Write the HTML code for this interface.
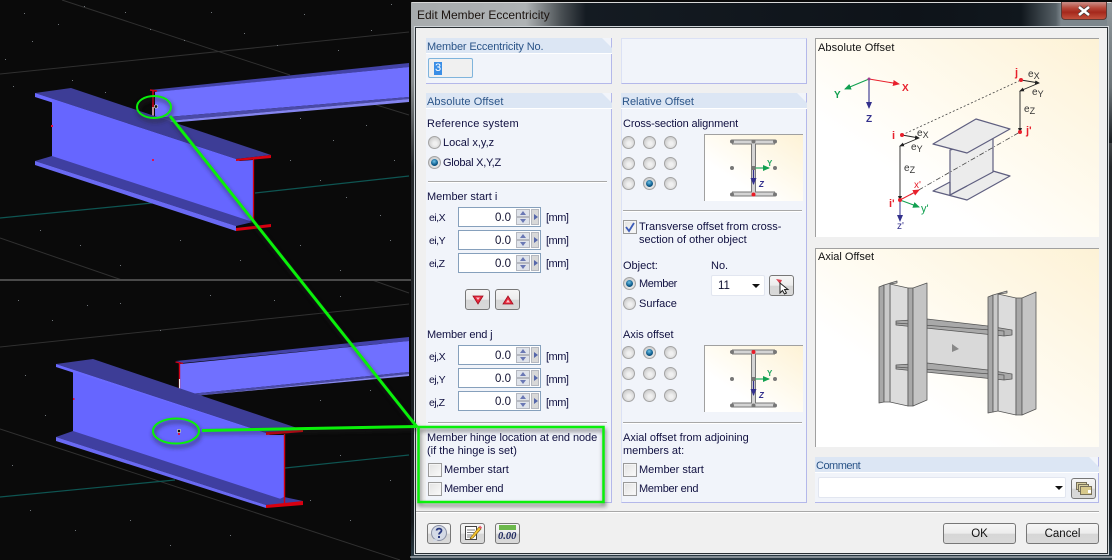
<!DOCTYPE html>
<html><head><meta charset="utf-8"><title>Edit Member Eccentricity</title>
<style>
html,body{margin:0;padding:0;background:#0a0a0a}
#p{position:relative;width:1112px;height:560px;overflow:hidden;background:#0a0a0a;font-family:"Liberation Sans",sans-serif;font-size:11px;color:#101040}
#p div,#p span.t{position:absolute}
.t{white-space:nowrap;line-height:13px;margin-top:1px}
.l{font-size:10.500px;letter-spacing:-.5px}
.u{letter-spacing:-.5px}
.gb{background:#f1f4fa;border-right:1px solid #b4b8ea;border-bottom:1px solid #b4b8ea;box-sizing:border-box}
.gh{position:absolute;left:0;top:0;height:15px;right:-1px;background:#dce6f4;clip-path:polygon(0 0,calc(100% - 10px) 0,100% 10px,100% 100%,0 100%);color:#2a5488;padding-left:1px;line-height:18px;white-space:nowrap;border-bottom:1px solid #fff}
.r{width:11px;height:11px;margin:.5px;border-radius:50%;border:1px solid #a4a4a4;background:radial-gradient(circle at 55% 60%,#f0f0f0 20%,#bfbfbf 95%)}
.s::after{content:"";position:absolute;left:2px;top:2px;width:7px;height:7px;border-radius:50%;background:radial-gradient(circle at 45% 35%,#6fc3e8,#0f5f90 55%,#06304f)}
.c{width:12px;height:12px;border:1px solid #9a9a9a;background:linear-gradient(135deg,#e2e2e2,#fafafa);box-shadow:inset 0 0 0 1px #f4f4f4}
.i{width:81px;height:18px;border:1px solid #86a0bc;background:#fff;text-align:right}
.i b{position:absolute;font-weight:normal;font-size:11.500px;right:29px;top:3.500px;line-height:13px;color:#101030}
.i i{position:absolute;display:block;background:#dfe3ea;border:1px solid #b5b8c0;box-sizing:border-box}
.i i.u{left:57px;top:1px;width:14px;height:8px}
.i i.d{left:57px;top:9px;width:14px;height:8px}
.i i.g{left:72px;top:1px;width:8px;height:16px;background:#d8d8d8}
.i i::after{content:"";position:absolute;left:3px;top:1px;border:3.500px solid transparent;border-top:0;border-bottom:4px solid #6a78b4}
.i i.d::after{border-bottom:0;border-top:4px solid #6a78b4}
.i i.g::after{left:2px;top:4px;border:3.500px solid transparent;border-right:0;border-left:4px solid #5566aa}
.b{box-sizing:border-box;border:1px solid #777;border-radius:3px;background:linear-gradient(#f6f6f6 0,#ececec 50%,#d6d6d6 52%,#d9d9d9 100%)}
.sep{height:1px;background:#a8a8a8;border-bottom:1px solid #fff}
.im{box-sizing:border-box;border-left:1px solid #a0a0a0;border-top:1px solid #a0a0a0;background:linear-gradient(to bottom left,#fdf2d6 0,#fffbf0 45%,#fff 70%,#fff 100%)}
</style></head><body><div id="p">

<!-- 3D views -->
<svg width="420" height="560" style="position:absolute;left:0;top:0">
<rect width="420" height="560" fill="#0a0a0a"/>
<g stroke="#303030" stroke-width="1" fill="none">
<path d="M0 74L409 32M62 0L290 75M370 103L409 115M0 238L122 280M0 347L409 304M0 429L400 560M372 280L409 293"/>
</g>
<g stroke="#0e5552" stroke-width="1.200" fill="none"><path d="M0 218L152 203M255 193L409 176M0 497L175 480M285 468L409 455"/></g>
<path fill="#6f7478" d="M24 13h1v1h-1zM58 24h1v1h-1zM32 41h1v1h-1zM5 59h1v1h-1zM84 6h1v1h-1zM125 12h1v1h-1zM150 29h1v1h-1zM184 40h1v1h-1zM211 12h1v1h-1zM244 33h1v1h-1zM277 45h1v1h-1zM304 14h1v1h-1zM338 50h1v1h-1zM371 30h1v1h-1zM391 4h1v1h-1zM13 86h1v1h-1zM72 80h1v1h-1zM105 92h1v1h-1zM300 118h1v1h-1zM333 140h1v1h-1zM366 125h1v1h-1zM394 160h1v1h-1zM290 160h1v1h-1zM320 180h1v1h-1zM346 197h1v1h-1zM380 215h1v1h-1zM40 230h1v1h-1zM80 245h1v1h-1zM120 265h1v1h-1zM180 240h1v1h-1zM240 260h1v1h-1zM300 245h1v1h-1zM340 270h1v1h-1zM390 240h1v1h-1zM18 300h1v1h-1zM52 320h1v1h-1zM87 305h1v1h-1zM120 303h1v1h-1zM160 330h1v1h-1zM210 295h1v1h-1zM274 300h1v1h-1zM340 296h1v1h-1zM25 375h1v1h-1zM45 415h1v1h-1zM12 465h1v1h-1zM30 510h1v1h-1zM75 530h1v1h-1zM130 520h1v1h-1zM170 545h1v1h-1zM230 535h1v1h-1zM310 500h1v1h-1zM350 520h1v1h-1zM390 480h1v1h-1zM320 400h1v1h-1zM370 390h1v1h-1zM340 455h1v1h-1z"/>
<rect y="279" width="420" height="2" fill="#4a4a4a"/>

<!-- top: rear beam -->
<polygon points="150,90 409,63 409,67 157,92" fill="#4343a8"/>
<polygon points="155,92 409,67 409,97 155,118" fill="#7070ff"/>
<polygon points="155,118 409,97 409,99 156,122" fill="#4a4aa8"/>
<polygon points="156,122 409,99 409,102 157,124" fill="#8484f0"/>
<path d="M150 90L157 91M153 91V123M150 122L157 123" stroke="#d00018" stroke-width="1.600" fill="none"/>
<path d="M153 107V118" stroke="#eee" stroke-width="1.200"/>
<!-- top: front beam -->
<polygon points="35,93 71,88 271,155 236,159" fill="#3d3d96"/>
<polygon points="35,93 236,159 236,161 35,97" fill="#6a6aff"/>
<polygon points="52,99 240,161 253,160 253,220 240,224 52,160" fill="#6666ff"/>
<polygon points="52,156 35,161 236,226 253,222" fill="#3f3fa0"/>
<polygon points="35,161 236,226 236,231 35,165" fill="#6a6af4"/>
<polygon points="236,159 271,155 271,158 236,161" fill="#d80010"/>
<polygon points="236,228 271,224 271,227 236,231" fill="#d80010"/>
<path d="M253.500 159V221" stroke="#d80010" stroke-width="1.300"/>
<rect x="51" y="125" width="2" height="2" fill="#e01040"/><rect x="152" y="159" width="2" height="2" fill="#e01050"/>
<!-- bottom: rear beam -->
<polygon points="176,361 409,337 409,341 183,363" fill="#4343a8"/>
<polygon points="180,364 409,341 409,372 180,395" fill="#7070ff"/>
<polygon points="180,395 409,372 409,374 182,397" fill="#4a4aa8"/>
<polygon points="182,397 409,374 409,376 183,397" fill="#8888f0"/>
<path d="M175.500 362L183 363.500M179.500 363V396M175.500 394.500L183 396" stroke="#d00018" stroke-width="1.400" fill="none"/>
<path d="M179.500 379V395" stroke="#eee" stroke-width="1.100"/>
<!-- bottom: front beam -->
<polygon points="56,364 93,359 303,430 266,433" fill="#3d3d96"/>
<polygon points="56,364 266,433 266,435 56,367" fill="#6a6aff"/>
<polygon points="73,372 270,435 284,435 284,503 270,505 73,433" fill="#6666ff"/>
<polygon points="73,431 56,437 266,505 284,500" fill="#3f3fa0"/>
<polygon points="56,437 266,505 266,508 56,441" fill="#6a6af4"/>
<polygon points="284,497 303,501 303,503 266,505" fill="#3f3fa0"/>
<polygon points="266,432 303,430 303,432 266,435" fill="#d80010"/>
<polygon points="266,505 303,501 303,505 266,508" fill="#d80010"/>
<path d="M284.500 434V503" stroke="#d80010" stroke-width="1.400"/>
<rect x="73" y="398" width="1.500" height="2" fill="#e01040"/><rect x="178" y="433" width="2" height="2" fill="#e01050"/>
<circle cx="156" cy="106.500" r="1.700" fill="#111" stroke="#ddd" stroke-width=".7"/>
<circle cx="179" cy="431" r="1.700" fill="#111" stroke="#ddd" stroke-width=".7"/>
</svg>

<!-- window frame -->
<div style="left:411px;top:2px;width:701px;height:558px;border-radius:6px 6px 0 0;background:linear-gradient(#aeb2b4 0,#8a8e90 80px,#25282b 165px,#14181c 520px,#2a3a44 555px)"></div>
<div style="left:411px;top:2px;width:701px;height:1px;background:#d8d8d8;border-radius:6px 6px 0 0"></div>
<div style="left:411px;top:3px;width:696px;height:25px;background:linear-gradient(90deg,#a7abad 0,#aeb2b4 115px,#4a5054 150px,#141b22 175px,#0e1319 500px,#10171d 610px,#566066 645px,#7c868c 650px)"></div>
<div style="left:1107px;top:3px;width:5px;height:140px;background:linear-gradient(#8f979b,#6c7478 60%,#1a1e22)"></div>
<div style="left:410px;top:556px;width:702px;height:2px;background:#cfd4d8;opacity:.55"></div>
<span class="t" style="left:417px;top:8px;font-size:12px;color:#1c1410">Edit Member Eccentricity</span>
<!-- close -->
<div style="left:1061px;top:2px;width:46px;height:18px;box-sizing:border-box;border:1px solid #5d3a36;border-top:0;border-radius:0 0 4px 4px;background:linear-gradient(#c9908a 0,#b8483a 35%,#a5281c 60%,#c2503c 100%)"></div>
<svg width="16" height="12" style="position:absolute;left:1076px;top:5px"><path d="M3 2L13 10M13 2L3 10" stroke="#3a3a3a" stroke-width="4"/><path d="M3 2L13 10M13 2L3 10" stroke="#fff" stroke-width="2.600"/></svg>

<!-- client -->
<div style="left:416px;top:28px;width:691px;height:525px;background:#f0f0f0;box-shadow:0 0 0 1px #2a3034,0 0 0 2px #cfd4d8"></div>

<!-- Member Eccentricity No. -->
<div class="gb" style="left:426px;top:38px;width:186px;height:46px"><div class="gh" style="letter-spacing:-.15px">Member Eccentricity No.</div></div>
<div style="left:428px;top:58px;width:43px;height:18px;border:1px solid #7fb4dc;border-radius:2px;background:#f0f0f0"></div>
<span class="t" style="left:434px;top:61px;background:#3a8ee6;color:#fff;padding:0 1px;line-height:13px">3</span>

<!-- Blank group -->
<div class="gb" style="left:621px;top:38px;width:186px;height:46px;border-left:1px solid #dbe1f5;border-top:1px solid #dbe1f5"></div>

<!-- Absolute Offset -->
<div class="gb" style="left:426px;top:93px;width:186px;height:410px"><div class="gh" style="letter-spacing:.1px">Absolute Offset</div></div>
<span class="t" style="left:427px;top:117px;letter-spacing:.2px">Reference system</span>
<div class="r" style="left:427px;top:135px"></div><span class="t" style="left:443px;top:136px">Local x,y,z</span>
<div class="r s" style="left:427px;top:155px"></div><span class="t" style="left:443px;top:156px;letter-spacing:-.25px">Global X,Y,Z</span>
<div class="sep" style="left:428px;top:181px;width:179px"></div>
<span class="t" style="left:427px;top:190px">Member start i</span>

<span class="t l" style="left:429px;top:211px">ei,X</span>
<div class="i" style="left:458px;top:207px"><b>0.0</b><i class="u"></i><i class="d"></i><i class="g"></i></div><span class="t u" style="left:546px;top:211px">[mm]</span>
<span class="t l" style="left:429px;top:234px">ei,Y</span>
<div class="i" style="left:458px;top:230px"><b>0.0</b><i class="u"></i><i class="d"></i><i class="g"></i></div><span class="t u" style="left:546px;top:234px">[mm]</span>
<span class="t l" style="left:429px;top:257px">ei,Z</span>
<div class="i" style="left:458px;top:253px"><b>0.0</b><i class="u"></i><i class="d"></i><i class="g"></i></div><span class="t u" style="left:546px;top:257px">[mm]</span>

<div class="b" style="left:465px;top:289px;width:25px;height:21px"></div>
<svg width="14" height="12" style="position:absolute;left:471px;top:294px"><path d="M2 2H12L7 10Z" fill="#e8293c" stroke="#a01020" stroke-width=".8"/><path d="M5 3.500H9L7 6Z" fill="#ffc0c8"/></svg>
<div class="b" style="left:495px;top:289px;width:25px;height:21px"></div>
<svg width="14" height="12" style="position:absolute;left:501px;top:294px"><path d="M2 10H12L7 2Z" fill="#e8293c" stroke="#a01020" stroke-width=".8"/><path d="M5 8.500H9L7 5.500Z" fill="#ffc0c8"/></svg>

<span class="t" style="left:427px;top:328px;letter-spacing:-.15px">Member end j</span>
<span class="t l" style="left:429px;top:350px">ej,X</span>
<div class="i" style="left:458px;top:345px"><b>0.0</b><i class="u"></i><i class="d"></i><i class="g"></i></div><span class="t u" style="left:546px;top:350px">[mm]</span>
<span class="t l" style="left:429px;top:373px">ej,Y</span>
<div class="i" style="left:458px;top:368px"><b>0.0</b><i class="u"></i><i class="d"></i><i class="g"></i></div><span class="t u" style="left:546px;top:373px">[mm]</span>
<span class="t l" style="left:429px;top:396px">ej,Z</span>
<div class="i" style="left:458px;top:391px"><b>0.0</b><i class="u"></i><i class="d"></i><i class="g"></i></div><span class="t u" style="left:546px;top:396px">[mm]</span>
<div class="sep" style="left:428px;top:422px;width:179px"></div>
<span class="t" style="left:427px;top:431px;letter-spacing:-.07px">Member hinge location at end node</span>
<span class="t" style="left:427px;top:444px">(if the hinge is set)</span>
<div class="c" style="left:428px;top:463px"></div><span class="t" style="left:444px;top:463px">Member start</span>
<div class="c" style="left:428px;top:482px"></div><span class="t" style="left:444px;top:482px;letter-spacing:-.25px">Member end</span>

<!-- Relative Offset -->
<div class="gb" style="left:621px;top:93px;width:186px;height:410px;border-left:1px solid #dbe1f5"><div class="gh" style="left:-1px">Relative Offset</div></div>
<span class="t" style="left:623px;top:117px;letter-spacing:-.13px">Cross-section alignment</span>
<div class="r" style="left:621px;top:135px"></div><div class="r" style="left:642px;top:135px"></div><div class="r" style="left:663px;top:135px"></div>
<div class="r" style="left:621px;top:156px"></div><div class="r" style="left:642px;top:156px"></div><div class="r" style="left:663px;top:156px"></div>
<div class="r" style="left:621px;top:176px"></div><div class="r s" style="left:642px;top:176px"></div><div class="r" style="left:663px;top:176px"></div>
<div class="im" style="left:704px;top:134px;width:99px;height:67px"></div>
<div class="sep" style="left:623px;top:210px;width:179px"></div>
<div class="c" style="left:623px;top:220px"></div>
<svg width="14" height="14" style="position:absolute;left:623px;top:220px"><path d="M3 7L6 11L11 3" fill="none" stroke="#3c5cb8" stroke-width="1.800"/></svg>
<span class="t" style="left:639px;top:220px">Transverse offset from cross-</span>
<span class="t" style="left:639px;top:233px">section of other object</span>
<span class="t" style="left:623px;top:259px">Object:</span>
<span class="t" style="left:711px;top:259px">No.</span>
<div class="r s" style="left:622px;top:276px"></div><span class="t" style="left:639px;top:277px;letter-spacing:-.4px">Member</span>
<div class="r" style="left:622px;top:296px"></div><span class="t" style="left:639px;top:297px">Surface</span>
<div style="left:711px;top:275px;width:52px;height:19px;background:#fff;border:1px solid #e2e6f0;border-radius:2px"></div>
<span class="t" style="left:718px;top:279px;color:#101030;font-size:11.500px">11</span>
<div style="left:752px;top:284px;border:4px solid transparent;border-bottom:0;border-top:4px solid #111"></div>
<div class="b" style="left:769px;top:275px;width:25px;height:21px"></div>
<svg width="18" height="18" style="position:absolute;left:773px;top:277px"><path d="M3 2L9 3L7 7Z" fill="#d84050"/><path d="M7 6V16L9.500 13.500L11.500 17L13.500 16L11.500 12.500L15 12.500Z" fill="#fff" stroke="#222" stroke-width="1"/></svg>

<span class="t" style="left:623px;top:328px">Axis offset</span>
<div class="r" style="left:621px;top:345px"></div><div class="r s" style="left:642px;top:345px"></div><div class="r" style="left:663px;top:345px"></div>
<div class="r" style="left:621px;top:366px"></div><div class="r" style="left:642px;top:366px"></div><div class="r" style="left:663px;top:366px"></div>
<div class="r" style="left:621px;top:388px"></div><div class="r" style="left:642px;top:388px"></div><div class="r" style="left:663px;top:388px"></div>
<div class="im" style="left:704px;top:345px;width:99px;height:67px"></div>
<div class="sep" style="left:623px;top:422px;width:179px"></div>
<span class="t" style="left:623px;top:431px">Axial offset from adjoining</span>
<span class="t" style="left:623px;top:444px">members at:</span>
<div class="c" style="left:623px;top:463px"></div><span class="t" style="left:639px;top:463px">Member start</span>
<div class="c" style="left:623px;top:482px"></div><span class="t" style="left:639px;top:482px;letter-spacing:-.25px">Member end</span>

<!-- Picture panels -->
<div class="im" style="left:815px;top:38px;width:284px;height:199px"></div>
<span class="t" style="left:818px;top:41px;color:#111;letter-spacing:.1px">Absolute Offset</span>
<div class="im" style="left:815px;top:248px;width:284px;height:199px"></div>
<span class="t" style="left:818px;top:250px;color:#111">Axial Offset</span>

<!-- Comment -->
<div class="gb" style="left:815px;top:457px;width:284px;height:46px"><div class="gh" style="letter-spacing:-.5px">Comment</div></div>
<div style="left:818px;top:477px;width:246px;height:19px;background:#fff;border:1px solid #e2e6f0;border-radius:2px"></div>
<div style="left:1055px;top:486px;border:4px solid transparent;border-bottom:0;border-top:4px solid #111"></div>
<div class="b" style="left:1071px;top:478px;width:25px;height:21px"></div>
<svg width="18" height="16" style="position:absolute;left:1075px;top:481px"><rect x="1.500" y="1.500" width="10" height="7" fill="#d8cfa0" stroke="#77705a"/><rect x="3.500" y="3.500" width="10" height="7" fill="#d8cfa0" stroke="#77705a"/><rect x="5.500" y="5.500" width="11" height="8" fill="#d8c98c" stroke="#77705a"/><rect x="13" y="9" width="3" height="3" fill="#fff"/></svg>

<!-- Footer -->
<div class="sep" style="left:416px;top:511px;width:683px"></div>
<div class="b" style="left:427px;top:523px;width:24px;height:21px"></div>
<svg width="18" height="18" style="position:absolute;left:430px;top:524px"><circle cx="9" cy="9" r="7.500" fill="#d4dae6" stroke="#8a90a4"/><path d="M4 15L3 18L8 16Z" fill="#d4dae6"/><path d="M6.500 6.500C7 4 11.500 4 11.500 6.500C11.500 8.500 9 8.500 9 10.500" fill="none" stroke="#2a3a80" stroke-width="1.800"/><rect x="8" y="12" width="2" height="2" fill="#2a3a80"/></svg>
<div class="b" style="left:460px;top:523px;width:25px;height:21px"></div>
<svg width="20" height="18" style="position:absolute;left:463px;top:524px"><rect x="2.500" y="2.500" width="11" height="13" fill="#fff" stroke="#444"/><path d="M4 6H12M4 8.500H11M4 11H9M4 13H8" stroke="#555" stroke-width=".8"/><path d="M8 13L16 3L18 5L10 14L7 15Z" fill="#f4c430" stroke="#7a5a10" stroke-width=".6"/><path d="M16 3L17 1.500L19 3.500L18 5Z" fill="#e85a70"/></svg>
<div class="b" style="left:495px;top:523px;width:25px;height:21px"></div>
<div style="left:499px;top:525px;width:17px;height:5px;background:#6cb84c"></div>
<span class="t" style="left:498px;top:530px;font-family:'Liberation Serif',serif;font-style:italic;font-size:10.500px;font-weight:bold;color:#202a60;line-height:11px">0.00</span>

<div class="b" style="left:943px;top:523px;width:73px;height:21px;text-align:center;line-height:20px;color:#111;font-size:11.500px">OK</div>
<div class="b" style="left:1026px;top:523px;width:73px;height:21px;text-align:center;line-height:20px;color:#111;font-size:11.500px">Cancel</div>

<!-- Drawings -->
<svg width="1112" height="560" style="position:absolute;left:0;top:0;pointer-events:none">
<defs>
<marker id="mr" markerWidth="7" markerHeight="6" refX="6" refY="3" orient="auto" markerUnits="userSpaceOnUse"><path d="M0 0L7 3L0 6Z" fill="#e8202c"/></marker>
<marker id="mg" markerWidth="7" markerHeight="6" refX="6" refY="3" orient="auto" markerUnits="userSpaceOnUse"><path d="M0 0L7 3L0 6Z" fill="#11a050"/></marker>
<marker id="mb" markerWidth="7" markerHeight="6" refX="6" refY="3" orient="auto" markerUnits="userSpaceOnUse"><path d="M0 0L7 3L0 6Z" fill="#33308c"/></marker>
<marker id="mk" markerWidth="5" markerHeight="4" refX="4" refY="2" orient="auto" markerUnits="userSpaceOnUse"><path d="M0 0L5 2L0 4Z" fill="#222"/></marker>
<filter id="sh" x="-10%" y="-10%" width="120%" height="120%"><feGaussianBlur stdDeviation="2.200"/></filter>
</defs>

<!-- small I-section 1 -->
<g>
<path d="M732 142H775M732 194H775M753.500 143V193" stroke="#777" stroke-width="5" fill="none"/>
<path d="M732 142H775M732 194H775M753.500 143V193" stroke="#d4d4d4" stroke-width="3" fill="none"/>
<path d="M753.500 168H769" stroke="#22a860" stroke-width="1.200" marker-end="url(#mg)"/>
<path d="M753.500 168V184" stroke="#33308c" stroke-width="1.200" marker-end="url(#mb)"/>
<g fill="#777"><circle cx="732" cy="141.500" r="2"/><circle cx="753.500" cy="141.500" r="2"/><circle cx="775" cy="141.500" r="2"/><circle cx="732" cy="168" r="2"/><circle cx="775" cy="168" r="2"/><circle cx="732" cy="194.500" r="2"/><circle cx="775" cy="194.500" r="2"/><rect x="751.500" y="166" width="4" height="4"/></g>
<circle cx="753.500" cy="194.500" r="2" fill="#e81c28"/>
<text x="767" y="166" font-family="Liberation Sans,sans-serif" font-size="8" font-weight="bold" fill="#20a860">Y</text>
<text x="759" y="187" font-family="Liberation Sans,sans-serif" font-size="8" font-weight="bold" font-style="italic" fill="#33308c">Z</text>
</g>
<!-- small I-section 2 -->
<g>
<path d="M732 352H775M732 405H775M753.500 353V404" stroke="#777" stroke-width="5" fill="none"/>
<path d="M732 352H775M732 405H775M753.500 353V404" stroke="#d4d4d4" stroke-width="3" fill="none"/>
<path d="M753.500 379H769" stroke="#22a860" stroke-width="1.200" marker-end="url(#mg)"/>
<path d="M753.500 379V395" stroke="#33308c" stroke-width="1.200" marker-end="url(#mb)"/>
<g fill="#777"><circle cx="732" cy="352" r="2"/><circle cx="775" cy="352" r="2"/><circle cx="732" cy="379" r="2"/><circle cx="775" cy="379" r="2"/><circle cx="732" cy="405.500" r="2"/><circle cx="753.500" cy="405.500" r="2"/><circle cx="775" cy="405.500" r="2"/><rect x="751.500" y="377" width="4" height="4"/></g>
<circle cx="753.500" cy="352" r="2" fill="#e81c28"/>
<text x="767" y="376" font-family="Liberation Sans,sans-serif" font-size="8" font-weight="bold" fill="#20a860">Y</text>
<text x="759" y="398" font-family="Liberation Sans,sans-serif" font-size="8" font-weight="bold" font-style="italic" fill="#33308c">Z</text>
</g>

<!-- Absolute offset diagram -->
<g font-family="Liberation Sans,sans-serif">
<path d="M869 79L899 84" stroke="#e8202c" stroke-width="1.100" marker-end="url(#mr)"/>
<path d="M869 79L845 89" stroke="#11a050" stroke-width="1.100" marker-end="url(#mg)"/>
<path d="M869 79V108" stroke="#33308c" stroke-width="1.100" marker-end="url(#mb)"/>
<circle cx="869" cy="79" r="1.500" fill="#a04090"/>
<text x="902" y="91" font-size="10" font-weight="bold" fill="#e8202c">X</text>
<text x="834" y="98" font-size="10" font-weight="bold" fill="#11a050">Y</text>
<text x="866" y="122" font-size="10" font-weight="bold" fill="#33308c">Z</text>
<g fill="#ececec" stroke="#5f5f80" stroke-width="1.200" stroke-linejoin="round">
<polygon points="933,191 950,182 993,171 1010,176 967,200"/>
<polygon points="950,150 993,138 993,172 950,195"/>
<polygon points="933,144 976,119 1010,129 967,153"/>
</g>
<path d="M950 182V195L967 186" fill="none" stroke="#5f5f80" stroke-width="1.200"/>
<path d="M902 135L1021 80" stroke="#444" stroke-width=".8" stroke-dasharray="2 2" fill="none"/>
<path d="M910 195L1020 132" stroke="#444" stroke-width=".8" stroke-dasharray="5 2 1 2" fill="none"/>
<path d="M902 135L919 138" stroke="#222" stroke-width=".9" marker-end="url(#mk)"/>
<path d="M919 138L900 146" stroke="#222" stroke-width=".9" marker-end="url(#mk)"/>
<path d="M900 146V200" stroke="#222" stroke-width=".9" marker-end="url(#mk)"/>
<path d="M1021 80L1039 83" stroke="#222" stroke-width=".9" marker-end="url(#mk)"/>
<path d="M1039 83L1020 91" stroke="#222" stroke-width=".9" marker-end="url(#mk)"/>
<path d="M1020 91V132" stroke="#222" stroke-width=".9" marker-end="url(#mk)"/>
<path d="M900 200L919 190" stroke="#e8202c" stroke-width="1" marker-end="url(#mr)"/>
<path d="M900 200L919 207" stroke="#11a050" stroke-width="1" marker-end="url(#mg)"/>
<path d="M900 200V221" stroke="#33308c" stroke-width="1" marker-end="url(#mb)"/>
<g fill="#e8202c"><circle cx="902" cy="135" r="2"/><circle cx="1021" cy="80" r="2"/><circle cx="1020" cy="132" r="2"/><circle cx="900" cy="200" r="2"/></g>
<g fill="#e8202c" font-weight="bold" font-size="11"><text x="892" y="139">i</text><text x="1015" y="76">j</text><text x="1026" y="134">j'</text><text x="889" y="207">i'</text></g>
<g fill="#333" font-size="10"><text x="917" y="136">e<tspan font-size="9" dy="2">X</tspan></text><text x="911" y="150">e<tspan font-size="9" dy="2">Y</tspan></text><text x="904" y="171">e<tspan font-size="9" dy="2">Z</tspan></text><text x="1028" y="77">e<tspan font-size="9" dy="2">X</tspan></text><text x="1032" y="95">e<tspan font-size="9" dy="2">Y</tspan></text><text x="1024" y="112">e<tspan font-size="9" dy="2">Z</tspan></text></g>
<text x="914" y="188" font-size="10" fill="#e8202c">x'</text>
<text x="921" y="212" font-size="11" fill="#11a050">y'</text>
<text x="897" y="229" font-size="10" fill="#33308c">z'</text>
</g>

<!-- Axial offset diagram -->
<g stroke="#555" stroke-width=".8" stroke-linejoin="round">
<polygon points="890,284 908,288 908,406 890,402" fill="#dcdcdc"/>
<polygon points="879,287 884,285 884,402 879,403" fill="#a8a8a8"/>
<polygon points="884,285 897,281 897,283 890,284 890,402 884,402" fill="#c9c9c9"/>
<polygon points="998,294 1016,298 1016,415 998,411" fill="#dcdcdc"/>
<polygon points="919,326 988,333 988,372 919,364" fill="#d9d9d9"/>
<polygon points="896,321 927,319 988,326 1012,330 1012,335 1004,336 896,325" fill="#a9a9a9"/>
<polygon points="896,365 927,363 988,370 1012,374 1012,379 1004,380 896,369" fill="#a9a9a9"/>
<path d="M896 323L1004 331V336M896 367L1004 375V380" fill="none"/>
<polygon points="908,288 913,288 913,406 908,406" fill="#a8a8a8"/>
<polygon points="913,288 927,283 927,400 913,406" fill="#c4c4c4"/>
<polygon points="988,297 993,295 993,412 988,413" fill="#a8a8a8"/>
<polygon points="993,295 1007,291 1007,293 998,294 998,411 993,412" fill="#c9c9c9"/>
<polygon points="1016,298 1022,298 1022,415 1016,415" fill="#a8a8a8"/>
<polygon points="1022,298 1036,292 1036,409 1022,415" fill="#c4c4c4"/>
</g>
<polygon points="952,344 959,349 952,352" fill="#888"/>

<!-- Green callout -->
<g filter="url(#sh)" opacity=".55" transform="translate(1 3)" fill="none" stroke="#222" stroke-width="3">
<ellipse cx="154" cy="107" rx="17" ry="11"/><ellipse cx="176" cy="431" rx="23" ry="12.500"/>
<path d="M170 116L417 427M202 430L417 426"/>
<rect x="418.500" y="427" width="185" height="75"/>
</g>
<g fill="none" stroke="#0af00a">
<ellipse cx="154" cy="107" rx="17" ry="11" stroke-width="2"/>
<ellipse cx="176" cy="431" rx="23" ry="12.500" stroke-width="2"/>
<path d="M170 116L417 427" stroke-width="3"/>
<path d="M202 430.500L417 426.500" stroke-width="3"/>
<rect x="418.500" y="427" width="185" height="75" stroke-width="2.500"/>
</g>
</svg>
</div></body></html>
